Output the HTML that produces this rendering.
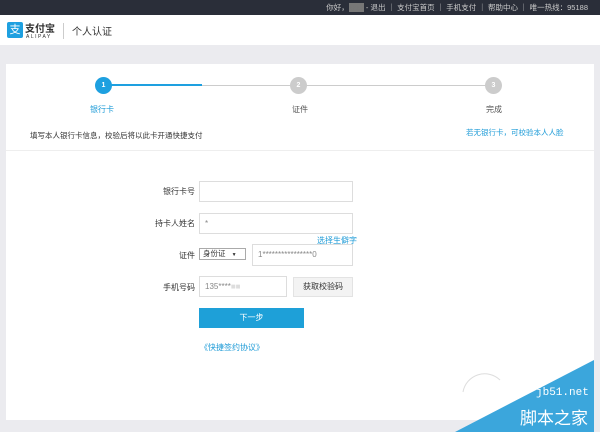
<!DOCTYPE html>
<html><head><meta charset="utf-8"><style>
*{margin:0;padding:0;box-sizing:border-box}
body{width:600px;height:432px;overflow:hidden;background:#ebebef;font-family:"Liberation Sans","Noto Sans CJK SC",sans-serif;font-size:8px;color:#333;position:relative}
.abs{position:absolute}
.top{left:0;top:0;width:600px;height:15px;background:#2a2e39;color:#ccc;font-size:7.5px;line-height:15px;text-align:right;padding-right:12px}
.hdr{left:0;top:15px;width:600px;height:30px;background:#fff}
.card{left:6px;top:64px;width:588px;height:356px;background:#fff}
.circ{width:17px;height:17px;border-radius:50%;color:#fff;font-size:7px;text-align:center;line-height:17px;font-weight:bold}
.lbl{width:60px;text-align:right;font-size:8px;color:#333}
.inp{border:1px solid #ddd;background:#fff;height:21px;font-size:8px;color:#888;line-height:19px;padding-left:5px}
</style></head><body>
<div class="abs top">你好，<span style="background:#777;color:#777">xxxx</span> - 退出 ｜ 支付宝首页 ｜ 手机支付 ｜ 帮助中心 ｜ 唯一热线：95188</div>
<div class="abs hdr">
 <div class="abs" style="left:7px;top:7px;width:16px;height:16px;background:#1ea0e0;border-radius:2px;color:#fff;font-size:11px;line-height:16px;text-align:center">支</div>
 <div class="abs" style="left:25px;top:5px;font-size:10px;font-weight:bold;color:#333">支付宝</div>
 <div class="abs" style="left:26px;top:19px;font-size:5px;letter-spacing:1.5px;color:#333">ALIPAY</div>
 <div class="abs" style="left:63px;top:8px;width:1px;height:16px;background:#ccc"></div>
 <div class="abs" style="left:72px;top:8px;font-size:10px;color:#333">个人认证</div>
</div>
<div class="abs card"></div>
<div class="abs" style="left:104px;top:84px;width:98px;height:2px;background:#1ea0e0"></div>
<div class="abs" style="left:202px;top:85px;width:292px;height:1px;background:#ccc"></div>
<div class="abs circ" style="left:95px;top:77px;background:#1ea0e0">1</div>
<div class="abs circ" style="left:290px;top:77px;background:#ccc">2</div>
<div class="abs circ" style="left:485px;top:77px;background:#ccc">3</div>
<div class="abs" style="left:90px;top:104px;color:#1e9bd7">银行卡</div>
<div class="abs" style="left:292px;top:104px;color:#555">证件</div>
<div class="abs" style="left:486px;top:104px;color:#555">完成</div>
<div class="abs" style="left:30px;top:130px;color:#333;font-size:7.5px">填写本人银行卡信息，校验后将以此卡开通快捷支付</div>
<div class="abs" style="left:466px;top:127px;color:#1e9bd7;font-size:7.5px">若无银行卡，可校验本人人脸</div>
<div class="abs" style="left:6px;top:150px;width:588px;height:1px;background:#eee"></div>
<div class="abs lbl" style="left:135px;top:186px">银行卡号</div>
<div class="abs inp" style="left:199px;top:181px;width:154px"></div>
<div class="abs lbl" style="left:135px;top:218px">持卡人姓名</div>
<div class="abs inp" style="left:199px;top:213px;width:154px">*</div>
<div class="abs" style="left:317px;top:235px;color:#1e9bd7">选择生僻字</div>
<div class="abs lbl" style="left:135px;top:250px">证件</div>
<div class="abs" style="left:199px;top:248px;width:47px;height:12px;border:1px solid #aaa;font-size:7.5px;line-height:10px;padding-left:3px">身份证 <span style="font-size:5px;margin-left:4px">▼</span></div>
<div class="abs inp" style="left:252px;top:244px;width:101px;height:22px">1****************0</div>
<div class="abs lbl" style="left:135px;top:282px">手机号码</div>
<div class="abs inp" style="left:199px;top:276px;width:88px">135****<span style="color:#ddd">■■</span></div>
<div class="abs" style="left:293px;top:277px;width:60px;height:20px;background:#f3f3f3;border:1px solid #e3e3e3;text-align:center;line-height:18px;color:#333">获取校验码</div>
<div class="abs" style="left:199px;top:308px;width:105px;height:20px;background:#1ea0d8;color:#fff;text-align:center;line-height:20px">下一步</div>
<div class="abs" style="left:200px;top:342px;color:#1e9bd7">《快捷签约协议》</div>
<svg class="abs" style="left:0;top:0" width="600" height="432"><polygon points="455,432 594,360 594,432" fill="#3ba6dc"/><path d="M463,392 A22,22 0 0 1 500,380" stroke="#ddd" fill="none"/></svg>
<div class="abs" style="left:536px;top:387px;color:#fff;font-size:11px;font-family:'Liberation Mono',monospace">jb51.net</div>
<div class="abs" style="left:520px;top:404px;color:#fff;font-size:17px">脚本之家</div>
<div class="abs" style="left:594px;top:360px;width:6px;height:72px;background:#ebebef"></div>
</body></html>
